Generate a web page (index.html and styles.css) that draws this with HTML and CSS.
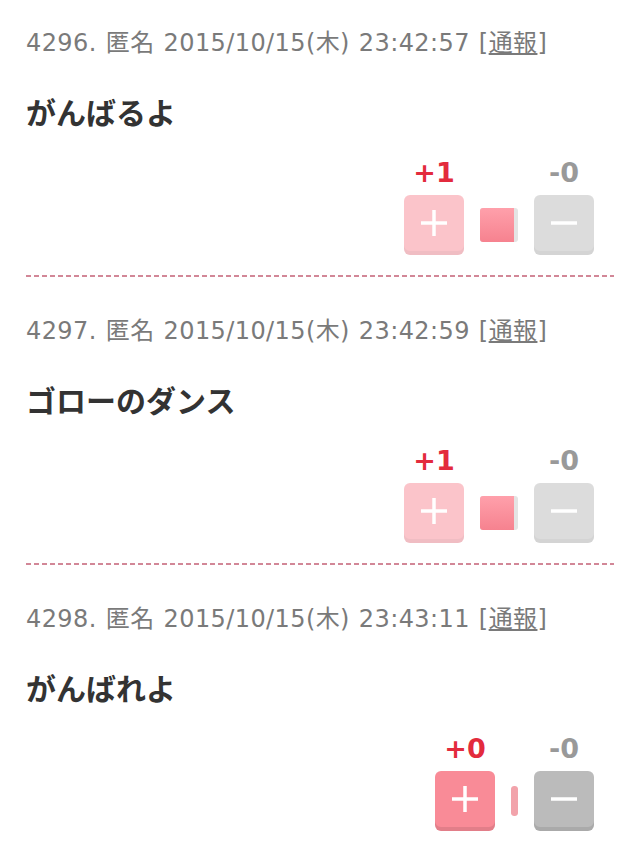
FILE: index.html
```html
<!DOCTYPE html>
<html lang="ja">
<head>
    <meta charset="UTF-8">
    <meta name="viewport" content="width=device-width, initial-scale=1.0">
    <title>コメント</title>
    <link rel="stylesheet" href="styles.css">
</head>
<body>
    <div class="thread">
        <div class="post">
            <div class="post-head">4296. 匿名 2015/10/15(木) 23:42:57 [<a href="#">通報</a>]</div>
            <div class="post-body">がんばるよ</div>
            <div class="votes">
                <span class="count plus">+1</span>
                <span></span>
                <span class="count minus">-0</span>
                <button class="vote vote-plus voted">
                    <svg width="28" height="28" viewBox="0 0 28 28"><path d="M14 1v26M1 14h26" stroke="#fff" stroke-width="3.5"/></svg>
                </button>
                <div class="ratio"><div class="ratio-fill" style="width: 34px"></div></div>
                <button class="vote vote-minus voted">
                    <svg width="28" height="28" viewBox="0 0 28 28"><path d="M1 14h26" stroke="#fff" stroke-width="3.5"/></svg>
                </button>
            </div>
        </div>
        <div class="divider"></div>
        <div class="post">
            <div class="post-head">4297. 匿名 2015/10/15(木) 23:42:59 [<a href="#">通報</a>]</div>
            <div class="post-body">ゴローのダンス</div>
            <div class="votes">
                <span class="count plus">+1</span>
                <span></span>
                <span class="count minus">-0</span>
                <button class="vote vote-plus voted">
                    <svg width="28" height="28" viewBox="0 0 28 28"><path d="M14 1v26M1 14h26" stroke="#fff" stroke-width="3.5"/></svg>
                </button>
                <div class="ratio"><div class="ratio-fill" style="width: 34px"></div></div>
                <button class="vote vote-minus voted">
                    <svg width="28" height="28" viewBox="0 0 28 28"><path d="M1 14h26" stroke="#fff" stroke-width="3.5"/></svg>
                </button>
            </div>
        </div>
        <div class="divider"></div>
        <div class="post">
            <div class="post-head">4298. 匿名 2015/10/15(木) 23:43:11 [<a href="#">通報</a>]</div>
            <div class="post-body">がんばれよ</div>
            <div class="votes">
                <span class="count plus">+0</span>
                <span></span>
                <span class="count minus">-0</span>
                <button class="vote vote-plus">
                    <svg width="28" height="28" viewBox="0 0 28 28"><path d="M14 1v26M1 14h26" stroke="#fff" stroke-width="3.5"/></svg>
                </button>
                <div class="ratio ratio-empty"><div class="ratio-fill" style="width: 100%"></div></div>
                <button class="vote vote-minus">
                    <svg width="28" height="28" viewBox="0 0 28 28"><path d="M1 14h26" stroke="#fff" stroke-width="3.5"/></svg>
                </button>
            </div>
        </div>
    </div>
</body>
</html>
```

FILE: styles.css
```css
body {
    margin: 0;
    background: #fff;
    font-family: "DejaVu Sans", "Noto Sans CJK JP", sans-serif;
}
.thread {
    padding: 0 21px 0 26px;
}
.post {
    padding-top: 38px;
    padding-bottom: 20px;
}
.post:first-child {
    padding-top: 27px;
}
.post-head {
    font-size: 24px;
    line-height: 32px;
    color: #7a7a7a;
    letter-spacing: 0.4px;
    word-spacing: 1px;
    white-space: nowrap;
}
.post-head a {
    color: #7a7a7a;
    text-decoration: underline;
}
.post-body {
    margin-top: 32px;
    font-family: "Noto Sans CJK JP", sans-serif;
    font-size: 30px;
    font-weight: bold;
    line-height: 40px;
    color: #333;
}
.votes {
    margin-top: 29px;
    padding-right: 20px;
    display: grid;
    grid-template-columns: 60px auto 60px;
    justify-content: end;
    align-items: center;
    column-gap: 16px;
    row-gap: 9px;
}
.count {
    text-align: center;
    font-size: 27px;
    font-weight: bold;
    line-height: 26px;
}
.count.plus { color: #e32b3d; }
.count.minus { color: #999; }
.vote {
    width: 60px;
    height: 60px;
    padding: 0 0 4px;
    border: none;
    border-radius: 6px;
    display: flex;
    align-items: center;
    justify-content: center;
    box-shadow: inset 0 -4px 0 rgba(0, 0, 0, 0.09);
    cursor: pointer;
}
.vote-plus { background: #f98b97; }
.vote-minus { background: #bbb; }
.vote.voted { opacity: 0.5; }
.ratio {
    width: 38px;
    height: 34px;
    border-radius: 3px;
    background: #e4e4e4;
    overflow: hidden;
}
.ratio-fill {
    height: 100%;
    background: linear-gradient(#ffa0ab, #f6828f);
}
.ratio-empty {
    width: 7px;
    height: 30px;
    background: #fbe3e5;
}
.ratio-empty .ratio-fill {
    background: #f2a3ab;
    border-radius: 3px;
}
.divider {
    height: 2px;
    background: repeating-linear-gradient(90deg, #d28797 0 5px, transparent 5px 8px);
}
```
